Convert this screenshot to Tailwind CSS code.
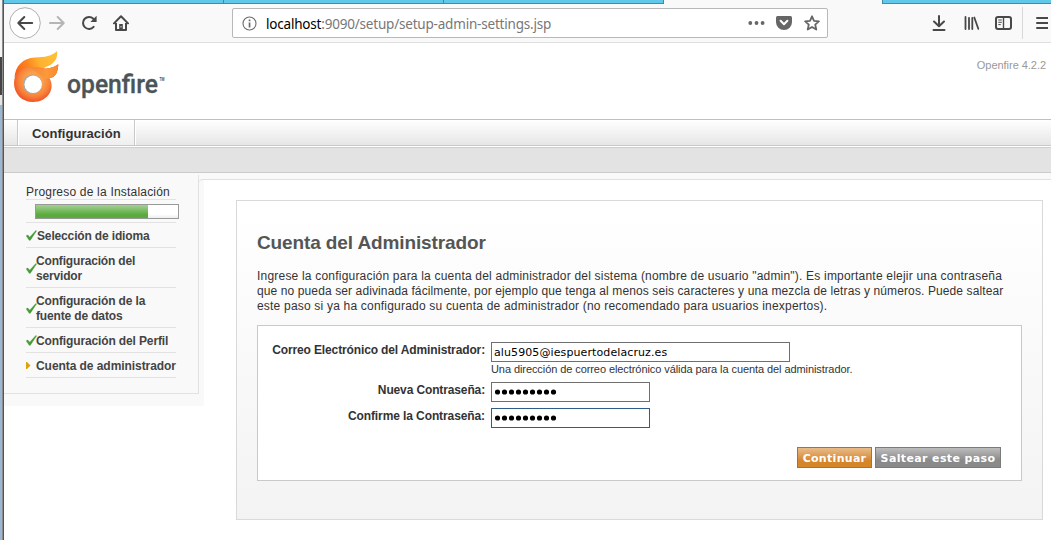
<!DOCTYPE html>
<html lang="es">
<head>
<meta charset="utf-8">
<title>Openfire - Cuenta del Administrador</title>
<script src="https://cdn.jsdelivr.net/npm/@tailwindcss/browser@4"></script>
</head>
<body class="flex h-[540px] w-[1051px] overflow-hidden bg-white font-['Liberation_Sans',sans-serif] text-[12px] leading-[15px] text-[#333]">

<!-- Desktop edge and window frame -->
<div class="flex h-full w-1 shrink-0">
  <div class="flex w-[2px] flex-col">
    <div class="h-[57px] bg-[#f4f4f4]"></div>
    <div class="h-[38px] bg-[#444]"></div>
    <div class="h-[10px] bg-[#e4e4e4]"></div>
    <div class="flex-1 bg-[#9ab8d3]"></div>
  </div>
  <div class="w-px bg-[#8d8d8d]"></div>
  <div class="w-px bg-[#555]"></div>
</div>

<div class="flex min-w-0 flex-1 flex-col">
  <!-- Tab strip -->
  <div class="flex h-1 shrink-0 bg-[#f9f9f9]">
    <div class="w-[219px] border-b border-[#3f8da8] bg-[#62c8ea]"></div>
    <div class="w-[220px] border-b border-l border-[#3f8da8] bg-[#62c8ea]"></div>
    <div class="w-[221px] border-x border-b border-[#3f8da8] bg-[#62c8ea]"></div>
    <div class="w-[218px]"></div>
    <div class="flex-1 border-b border-l border-[#3f8da8] bg-[#62c8ea]"></div>
  </div>

  <!-- Browser toolbar -->
  <div class="flex h-[39px] shrink-0 items-center border-b border-[#dedede] bg-[#f9f9f9]">
    <svg class="ml-[5px] shrink-0" width="32" height="32" viewBox="0 0 32 32" fill="none"><circle cx="16" cy="16" r="15.3" fill="#fff" stroke="#b0b0b0"/><path d="M23.2 16H9.5M15.3 10l-6 6 6 6" stroke="#484848" stroke-width="2" stroke-linecap="round" stroke-linejoin="round"/></svg>
    <svg class="ml-2 shrink-0" width="16" height="16" viewBox="0 0 16 16" fill="none" stroke="#b5b5b5" stroke-width="2" stroke-linecap="round" stroke-linejoin="round"><path d="M1 8h13M8.7 2l6 6-6 6"/></svg>
    <svg class="ml-4 shrink-0" width="17" height="16" viewBox="0 0 17 16"><path d="M12.6 11.8A6 6 0 1 1 12.3 3.700" fill="none" stroke="#484848" stroke-width="2" stroke-linecap="round"/><path d="M15.6 .8v6.200H9.400z" fill="#484848"/></svg>
    <svg class="ml-[15px] shrink-0" width="16" height="16" viewBox="0 0 16 16" fill="none" stroke="#484848"><path d="M1 8.400 8 1.300l7 7.100" stroke-width="2" stroke-linecap="round" stroke-linejoin="round"/><path d="M3 8v7h10V8" stroke-width="2" stroke-linejoin="round"/><path d="M6.200 9h3.600v5H6.200z" fill="#484848" stroke="none"/><path d="M8 11v1.500" stroke="#ddd"/></svg>

    <div class="ml-[103px] flex h-[30px] w-[596px] shrink-0 items-center rounded-[2px] border border-[#b8b8b8] bg-white">
      <svg class="ml-[9px] shrink-0" width="15" height="15" viewBox="0 0 15 15"><circle cx="7.500" cy="7.500" r="6.500" fill="none" stroke="#6a6a6a" stroke-width="1.100"/><path d="M6.700 3.500h1.700v1.800H6.700zM6.700 6.500h1.700v5H6.700z" fill="#6a6a6a"/></svg>
      <div class="mt-[2px] ml-[9px] w-[447px] whitespace-nowrap font-['Noto_Sans',sans-serif] text-[13.5px] leading-[20px] tracking-[-0.2px] text-[#777]"><span class="text-black">localhost</span>:9090/setup/setup-admin-settings.jsp</div>
      <svg class="ml-[35px] shrink-0" width="17" height="6" viewBox="0 0 17 6" fill="#666"><circle cx="2.300" cy="3" r="1.900"/><circle cx="8.500" cy="3" r="1.900"/><circle cx="14.600" cy="3" r="1.900"/></svg>
      <svg class="ml-[11px] shrink-0" width="16" height="14" viewBox="0 0 16 14"><path d="M1.500 0h13Q16 0 16 1.500V6A8 8 0 0 1 0 6V1.500Q0 0 1.500 0z" fill="#666"/><path d="m4.600 4.800 3.400 3.400 3.400-3.400" fill="none" stroke="#fff" stroke-width="2" stroke-linecap="round" stroke-linejoin="round"/></svg>
      <svg class="ml-3 shrink-0" width="16" height="16" viewBox="0 0 16 16"><path d="m8 1.300 2 4.500 4.900.5-3.700 3.300 1.100 4.900L8 12l-4.300 2.500 1.100-4.900L1.100 6.300 6 5.800z" fill="none" stroke="#666" stroke-width="1.800" stroke-linejoin="round"/></svg>
    </div>

    <svg class="ml-[104px] shrink-0" width="14" height="16" viewBox="0 0 14 16" fill="none" stroke="#484848" stroke-width="2" stroke-linecap="round" stroke-linejoin="round"><path d="M7 1v10M2 6.500l5 4.700 5-4.700M1.500 15h11"/></svg>
    <svg class="ml-[18px] shrink-0" width="16" height="14" viewBox="0 0 16 14" fill="none" stroke="#484848" stroke-width="1.800" stroke-linecap="round"><path d="M1.500 1v12M5 1.800V13M8.300 1.800V13M10.300 1.500l4 11.300"/></svg>
    <svg class="ml-[15px] shrink-0" width="17" height="14" viewBox="0 0 17 14" fill="none" stroke="#484848"><rect x="1" y="1" width="15" height="12" rx="2" stroke-width="2"/><path d="M8.500 1v12" stroke-width="1.400"/><path d="M3.300 4h3.500M3.300 6.300h3.500M3.300 8.600h2.500"/></svg>
    <div class="ml-[10px] h-8 w-px bg-[#d8d8d8]"></div>
    <svg class="ml-[13px] shrink-0" width="12" height="12" viewBox="0 0 12 12" stroke="#484848" stroke-width="2" stroke-linecap="round"><path d="M1 1h11M1 6h11M1 11h11"/></svg>
  </div>

  <!-- Openfire header -->
  <header class="flex h-[77px] shrink-0 items-start justify-between border-b border-[#c0c0c0] pr-[5px]">
    <svg class="ml-2 mt-1 shrink-0" width="156" height="62" viewBox="12 47 156 62">
      <defs>
        <linearGradient id="flame" x1="16" y1="72" x2="52" y2="58" gradientUnits="userSpaceOnUse"><stop offset="0" stop-color="#f8641a"/><stop offset=".35" stop-color="#fc8420"/><stop offset=".65" stop-color="#ffb02e"/><stop offset="1" stop-color="#ffbe38"/></linearGradient>
        <radialGradient id="ring" cx="34" cy="81" r="22" gradientUnits="userSpaceOnUse"><stop offset=".4" stop-color="#f9a04a"/><stop offset=".7" stop-color="#f8823a"/><stop offset="1" stop-color="#ef4c23"/></radialGradient>
        <linearGradient id="lick" x1="28" y1="0" x2="58" y2="0" gradientUnits="userSpaceOnUse"><stop offset="0" stop-color="#f47a2c" stop-opacity="0"/><stop offset=".6" stop-color="#fb9a3a"/><stop offset="1" stop-color="#fb8a2a"/></linearGradient>
      </defs>
      <path d="M14.500 78C15 66 23 58 35 57.500 45 57.300 52 56 57 51c1 7-2 12.500-10 15.500-2 .8-3 1.500-3.500 2C37 69 22 66 14.500 78z" fill="url(#flame)"/>
      <path d="M14 83C14 73 22 67 33 67c9 0 11 2 15 1.300 4-.6 7-1.800 10.300-4.100C58 72 56 77 49.500 78.300 52 82 52.500 88 50 92.500 46.500 99 40 102 33 102 22 102 14 94 14 83z" fill="url(#ring)"/>
      <path d="M28 67.500c7-1 12 2 20 .8 4-.6 7-1.800 10.300-4.100C58 72 55 78 48 78.500 42 79 38 72 28 67.500z" fill="url(#lick)"/>
      <circle cx="32.300" cy="84" r="9.500" fill="#aaa"/><circle cx="33.200" cy="84.300" r="8.700" fill="#fff"/>
      <text x="67" y="92.500" font-family="Roboto" font-weight="500" font-size="25.500" fill="#4b5558" stroke="#4b5558" stroke-width=".3" textLength="91" lengthAdjust="spacingAndGlyphs">openfire</text>
      <text x="159.500" y="81" font-family="Roboto" font-weight="700" font-size="4.500" fill="#4b5558" textLength="5" lengthAdjust="spacingAndGlyphs">TM</text>
    </svg>
    <div class="mt-[15px] whitespace-nowrap text-[11px] tracking-[-0.04px] text-[#999]">Openfire 4.2.2</div>
  </header>

  <!-- Navigation -->
  <nav class="flex h-[26px] shrink-0 border-b border-[#c9c9c9] bg-linear-to-b from-white to-[#e6e6e6]">
    <div class="w-[14px] border-r border-[#c9c9c9]"></div>
    <div class="w-[117px] whitespace-nowrap border-r border-l border-l-white border-r-[#c9c9c9] bg-linear-to-b from-white to-[#efefef] pt-[6px] pl-[13px] text-[13px] font-bold tracking-[0.05px]">Configuración</div>
    <div class="w-px bg-white"></div>
  </nav>
  <div class="mt-px h-[26px] shrink-0 border-y border-t-[#cfcfcf] border-b-[#cbcbcb] bg-[#e3e3e3]"></div>

  <div class="flex flex-1 bg-linear-to-b from-[#f9f9f9] from-[6px] to-white to-[6px]">
    <!-- Setup progress -->
    <aside class="h-[233px] w-[200px] shrink-0 bg-[#f9f9f9] pt-[2px]">
      <div class="h-[219px] w-[195px] border-r border-b border-[#e2e2e2] pl-[22px]">
        <div class="flex w-[153px] flex-col">
          <div class="h-[25px] w-[150px] whitespace-nowrap border-b border-[#e2e2e2] pt-[9px] leading-4 tracking-[0.2px]">Progreso de la Instalación</div>
          <div class="mt-1 ml-[9px] h-[15px] w-[144px] border border-[#999] bg-linear-to-b from-white from-70% to-[#eee]">
            <div class="h-full w-[112px] bg-linear-to-b from-[#a3d193] to-[#5aaa3c] to-75%"></div>
          </div>
          <ul class="mt-[3px] w-[150px] border-t border-[#e2e2e2] font-bold text-[#444] *:flex *:items-center *:border-b *:border-[#e2e2e2] *:pt-[2px] *:whitespace-nowrap">
            <li class="h-[25px] tracking-[-0.15px]"><svg class="mb-px h-[11px] w-[11px] shrink-0" viewBox="0 0 11 11"><path d="M.2 5.800 1.800 5l1.900 2.300L9.800.5l.7.400L4.300 10.300H3.200z" fill="#459a35" stroke="#459a35" stroke-width=".4"/></svg>Selección de idioma</li>
            <li class="h-[40px] tracking-[-0.17px]"><svg class="mb-px h-[11px] w-[10px] shrink-0 overflow-visible" viewBox="0 0 10 11"><path d="M.2 5.800 1.800 5l1.900 2.300L9.800.5l.7.400L4.300 10.300H3.200z" fill="#459a35" stroke="#459a35" stroke-width=".4"/></svg><span>Configuración del<br>servidor</span></li>
            <li class="h-[40px] tracking-[-0.15px]"><svg class="mb-px h-[11px] w-[10px] shrink-0 overflow-visible" viewBox="0 0 10 11"><path d="M.2 5.800 1.800 5l1.900 2.300L9.800.5l.7.400L4.300 10.300H3.200z" fill="#459a35" stroke="#459a35" stroke-width=".4"/></svg><span>Configuración de la<br>fuente de datos</span></li>
            <li class="h-[25px] tracking-[-0.13px]"><svg class="mb-px h-[11px] w-[10px] shrink-0 overflow-visible" viewBox="0 0 10 11"><path d="M.2 5.800 1.800 5l1.900 2.300L9.800.5l.7.400L4.300 10.300H3.200z" fill="#459a35" stroke="#459a35" stroke-width=".4"/></svg>Configuración del Perfil</li>
            <li class="h-[25px] tracking-[-0.06px]"><svg class="mb-px h-[7px] w-[10px] shrink-0" viewBox="0 0 10 7"><path d="M0 0h1l3.500 3.500L1 7H0z" fill="#dba20f"/></svg>Cuenta de administrador</li>
          </ul>
        </div>
      </div>
    </aside>

    <!-- Content -->
    <main class="mt-[6px] -ml-[5px] flex-1 rounded-tl-[4px] border-t border-[#e0e0e0] pt-[20px] pl-[37px]">
      <section class="h-[320px] w-[807px] border border-[#d9d9d9] bg-linear-to-b from-white to-[#f3f3f3] pt-[32px] pl-5">
        <h1 class="text-[19px] leading-5 font-bold tracking-[-0.12px] whitespace-nowrap text-[#555]">Cuenta del Administrador</h1>
        <p class="mt-4 h-[56px] whitespace-nowrap"><span class="tracking-[0.205px]">Ingrese la configuración para la cuenta del administrador del sistema (nombre de usuario "admin"). Es importante elejir una contraseña</span><br><span class="tracking-[0.11px]">que no pueda ser adivinada fácilmente, por ejemplo que tenga al menos seis caracteres y una mezcla de letras y números. Puede saltear</span><br><span class="tracking-[0.2px]">este paso si ya ha configurado su cuenta de administrador (no recomendado para usuarios inexpertos).</span></p>
        <form class="flex h-[156px] w-[765px] flex-col border border-[#c9c9c9] bg-white pt-4">
          <div class="flex h-10">
            <label class="w-[227px] pt-px text-right font-bold tracking-[-0.13px] whitespace-nowrap">Correo Electrónico del Administrador:</label>
            <div class="ml-[6px]">
              <div class="h-5 w-[299px] border border-[#6f6f6f] pl-[2px] font-['DejaVu_Sans',sans-serif] text-[11px] leading-[19px] tracking-[0.1px] text-black">alu5905@iespuertodelacruz.es</div>
              <div class="text-[11px] tracking-[-0.08px] whitespace-nowrap">Una dirección de correo electrónico válida para la cuenta del administrador.</div>
            </div>
          </div>
          <div class="flex h-[26px]">
            <label class="w-[227px] pt-px text-right font-bold tracking-[-0.13px] whitespace-nowrap">Nueva Contraseña:</label>
            <div class="ml-[6px] flex h-5 w-[159px] items-center border border-[#6f6f6f] pl-[3px]"><svg width="63" height="6" viewBox="0 0 63 6"><path d="M2.500 3h57" stroke="#000" stroke-width="5.200" stroke-linecap="round" stroke-dasharray="0 7"/></svg></div>
          </div>
          <div class="flex h-[39px]">
            <label class="w-[227px] pt-px text-right font-bold tracking-[-0.1px] whitespace-nowrap">Confirme la Contraseña:</label>
            <div class="ml-[6px] flex h-5 w-[159px] items-center border border-[#2f5f88] pl-[3px]"><svg width="63" height="6" viewBox="0 0 63 6"><path d="M2.500 3h57" stroke="#000" stroke-width="5.200" stroke-linecap="round" stroke-dasharray="0 7"/></svg></div>
          </div>
          <div class="flex justify-end gap-[3px] pr-5 text-center font-['DejaVu_Sans',sans-serif] text-[11px] leading-[21px] font-bold whitespace-nowrap text-white">
            <div class="h-[21px] w-[75px] border border-[#7b7b7b] bg-linear-to-b from-[#e9bc88] to-[#d5862a] to-65% tracking-[0.3px]">Continuar</div>
            <div class="h-[21px] w-[126px] border border-[#7b7b7b] bg-linear-to-b from-[#bdbdbd] to-[#8a8a8a] to-65% tracking-[0.37px]">Saltear este paso</div>
          </div>
        </form>
      </section>
    </main>
  </div>
</div>
</body>
</html>
